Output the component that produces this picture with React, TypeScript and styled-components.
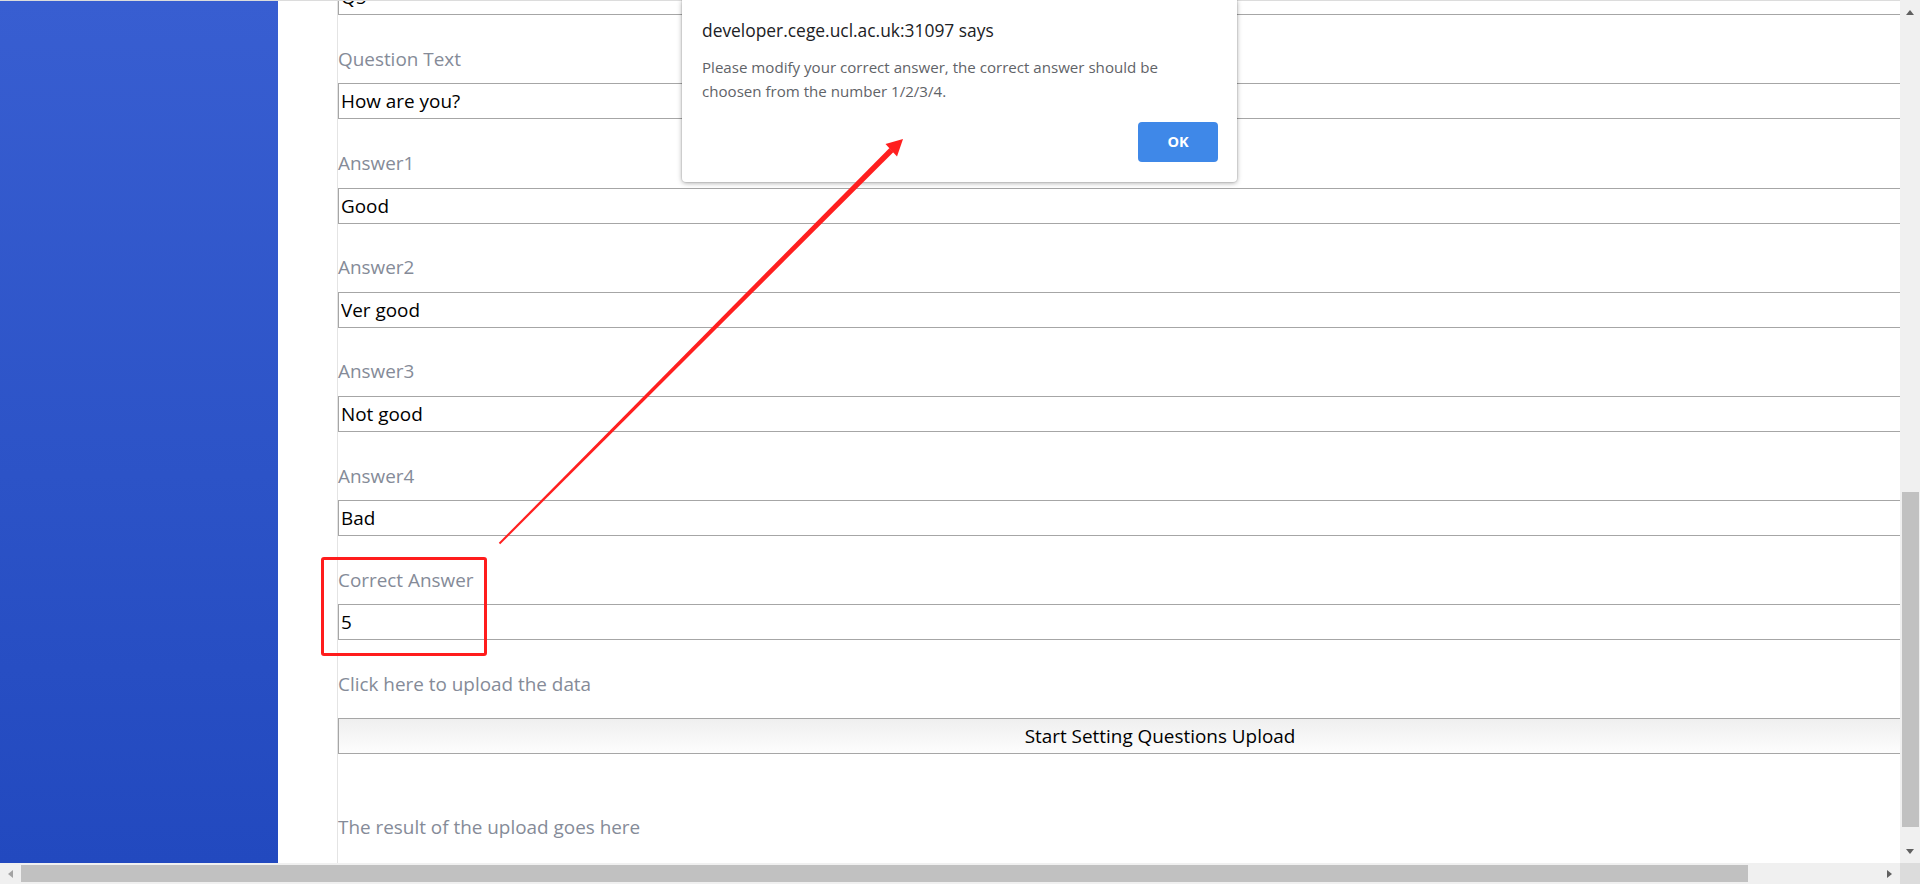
import React, { useLayoutEffect, useRef } from "react";
import styled, { createGlobalStyle } from "styled-components";

const Global = createGlobalStyle`
  html, body { margin: 0; padding: 0; width: 1920px; height: 884px; overflow: hidden; background: #fff; }
  body { font-family: "Open Sans", "Noto Sans", sans-serif; }
  * { box-sizing: border-box; }
`;

const Frame = styled.div`
  position: relative;
  width: 1920px;
  height: 884px;
  display: flex;
  flex-direction: column;
  overflow: hidden;
  background: #fff;
`;

const MainRow = styled.div`
  display: flex;
  height: 863px;
  flex: none;
`;

const LeftArea = styled.div`
  flex: 1;
  min-width: 0;
  display: flex;
  flex-direction: column;
`;

const TopLine = styled.div`
  height: 1px;
  flex: none;
  background: #dcdcdc;
`;

const BodyRow = styled.div`
  flex: 1;
  min-height: 0;
  display: flex;
`;

const Sidebar = styled.aside`
  width: 278px;
  flex: none;
  background: linear-gradient(180deg, #385ed1 0%, #2c53c7 55%, #2249bf 100%);
`;

const Viewport = styled.main`
  flex: 1;
  min-width: 0;
  overflow: hidden;
`;

const Page = styled.div`
  padding-left: 59px;
  width: max-content;
`;

const Form = styled.form`
  width: 1645px;
  border-left: 1px solid #e4e4e4;
  display: flex;
  flex-direction: column;
  padding-bottom: 60px;
`;

const Label = styled.label<{ $top?: number; $bottom?: number }>`
  display: block;
  font-size: 18.9px;
  line-height: 25px;
  color: #858b98;
  margin: ${(p) => p.$top ?? 31.6}px 0 ${(p) => p.$bottom ?? 11.6}px;
  white-space: nowrap;
`;

const TextInput = styled.input`
  display: block;
  width: 100%;
  height: 36px;
  margin: 0;
  padding: 0 2px;
  border: 1px solid #a6a6a6;
  border-radius: 0;
  background: #fff;
  color: #000;
  font: 18.9px "Open Sans", "Noto Sans", sans-serif;
  outline: none;
`;

const UploadButton = styled.button`
  display: block;
  width: 100%;
  height: 36px;
  margin: 0;
  padding: 0;
  border: 1px solid #a6a6a6;
  border-radius: 0;
  background: linear-gradient(180deg, #efefef 0%, #f6f6f6 50%, #fdfdfd 100%);
  color: #000;
  font: 18.9px "Open Sans", "Noto Sans", sans-serif;
`;

const ResultText = styled.div`
  margin-top: 61px;
  font-size: 18.9px;
  line-height: 25px;
  color: #858b98;
  white-space: nowrap;
`;

/* scrollbars */
const VScroll = styled.div`
  width: 20px;
  flex: none;
  background: #f0f0f0;
  display: flex;
  flex-direction: column;
`;

const ArrowBox = styled.div<{ $w?: number; $h?: number }>`
  flex: none;
  width: ${(p) => (p.$w ? `${p.$w}px` : "100%")};
  height: ${(p) => (p.$h ? `${p.$h}px` : "100%")};
  display: flex;
  align-items: center;
  justify-content: center;
`;

const Tri = styled.span<{ $dir: "up" | "down" | "left" | "right"; $color: string }>`
  width: 0;
  height: 0;
  ${(p) =>
    p.$dir === "up"
      ? `border-left: 4.5px solid transparent; border-right: 4.5px solid transparent; border-bottom: 5px solid ${p.$color};`
      : p.$dir === "down"
      ? `border-left: 4.5px solid transparent; border-right: 4.5px solid transparent; border-top: 5px solid ${p.$color};`
      : p.$dir === "left"
      ? `border-top: 4.5px solid transparent; border-bottom: 4.5px solid transparent; border-right: 5px solid ${p.$color};`
      : `border-top: 4.5px solid transparent; border-bottom: 4.5px solid transparent; border-left: 5px solid ${p.$color};`}
`;

const VTrack = styled.div`
  flex: 1;
  min-height: 0;
  padding-left: 2px;
`;

const VThumb = styled.div<{ $offset: number; $size: number }>`
  width: 17px;
  margin-top: ${(p) => p.$offset}px;
  height: ${(p) => p.$size}px;
  background: #c1c1c1;
`;

const HScroll = styled.div`
  height: 21px;
  flex: none;
  display: flex;
  background: #f0f0f0;
`;

const HTrack = styled.div`
  flex: 1;
  min-width: 0;
  padding-top: 2px;
`;

const HThumb = styled.div<{ $offset: number; $size: number }>`
  height: 17px;
  margin-left: ${(p) => p.$offset}px;
  width: ${(p) => p.$size}px;
  background: #c1c1c1;
`;

const Corner = styled.div`
  width: 20px;
  flex: none;
  background: #dcdcdc;
`;

/* alert dialog */
const Dialog = styled.div`
  position: absolute;
  left: 682px;
  top: 0;
  width: 555px;
  height: 182px;
  background: #fff;
  border-radius: 0 0 4px 4px;
  box-shadow: 0 1px 5px rgba(0, 0, 0, 0.35), 0 0 0 1px rgba(0, 0, 0, 0.06);
  padding: 18px 19px 0 20px;
  display: flex;
  flex-direction: column;
`;

const DialogTitle = styled.div`
  font-size: 17.4px;
  line-height: 24px;
  color: #202124;
  white-space: nowrap;
`;

const DialogMessage = styled.div`
  margin-top: 12.6px;
  font-size: 15.1px;
  line-height: 24px;
  color: #5f6368;
  width: 500px;
`;

const DialogActions = styled.div`
  margin-top: 19.4px;
  display: flex;
  justify-content: flex-end;
`;

const OkButton = styled.button`
  width: 80px;
  height: 40px;
  border: none;
  border-radius: 4px;
  background: #3f88e8;
  color: #fff;
  font: 700 14.5px "Open Sans", "Noto Sans", sans-serif;
  padding: 0;
`;

/* annotations */
const Highlight = styled.div`
  position: absolute;
  left: 321px;
  top: 557px;
  width: 166px;
  height: 99px;
  border: 3px solid #ff1c1c;
  border-radius: 3px;
  pointer-events: none;
`;

const ArrowLayer = styled.svg`
  position: absolute;
  left: 0;
  top: 0;
  width: 1920px;
  height: 884px;
  pointer-events: none;
`;

const fields: { label: string; value: string }[] = [
  { label: "Question Title", value: "Q5" },
  { label: "Question Text", value: "How are you?" },
  { label: "Answer1", value: "Good" },
  { label: "Answer2", value: "Ver good" },
  { label: "Answer3", value: "Not good" },
  { label: "Answer4", value: "Bad" },
  { label: "Correct Answer", value: "5" },
];

export default function App() {
  const viewRef = useRef<HTMLElement>(null);

  useLayoutEffect(() => {
    if (viewRef.current) {
      viewRef.current.scrollTop = 90;
      viewRef.current.scrollLeft = 0;
    }
  }, []);

  return (
    <>
      <Global />
      <Frame>
        <MainRow>
          <LeftArea>
            <TopLine />
            <BodyRow>
              <Sidebar />
              <Viewport ref={viewRef}>
                <Page>
                  <Form onSubmit={(e) => e.preventDefault()}>
                    {fields.map((f) => (
                      <React.Fragment key={f.label}>
                        <Label>{f.label}</Label>
                        <TextInput defaultValue={f.value} />
                      </React.Fragment>
                    ))}
                    <Label $bottom={21}>Click here to upload the data</Label>
                    <UploadButton type="button">Start Setting Questions Upload</UploadButton>
                    <ResultText>The result of the upload goes here</ResultText>
                  </Form>
                </Page>
              </Viewport>
            </BodyRow>
          </LeftArea>
          <VScroll>
            <ArrowBox $h={24}>
              <Tri $dir="up" $color="#606060" />
            </ArrowBox>
            <VTrack>
              <VThumb $offset={468} $size={335} />
            </VTrack>
            <ArrowBox $h={24}>
              <Tri $dir="down" $color="#606060" />
            </ArrowBox>
          </VScroll>
        </MainRow>
        <HScroll>
          <ArrowBox $w={21}>
            <Tri $dir="left" $color="#a3a3a3" />
          </ArrowBox>
          <HTrack>
            <HThumb $offset={0} $size={1727} />
          </HTrack>
          <ArrowBox $w={21}>
            <Tri $dir="right" $color="#606060" />
          </ArrowBox>
          <Corner />
        </HScroll>

        <Dialog role="alertdialog">
          <DialogTitle>developer.cege.ucl.ac.uk:31097 says</DialogTitle>
          <DialogMessage>
            Please modify your correct answer, the correct answer should be choosen from the number 1/2/3/4.
          </DialogMessage>
          <DialogActions>
            <OkButton type="button">OK</OkButton>
          </DialogActions>
        </Dialog>

        <Highlight />
        <ArrowLayer viewBox="0 0 1920 884">
          <polygon
            fill="#ff1f1f"
            points="500.2,544.2 498.8,542.8 889.5,148 893.5,152"
          />
          <polygon fill="#ff1f1f" points="903,139 885.5,144 897,156.5" />
        </ArrowLayer>
      </Frame>
    </>
  );
}
